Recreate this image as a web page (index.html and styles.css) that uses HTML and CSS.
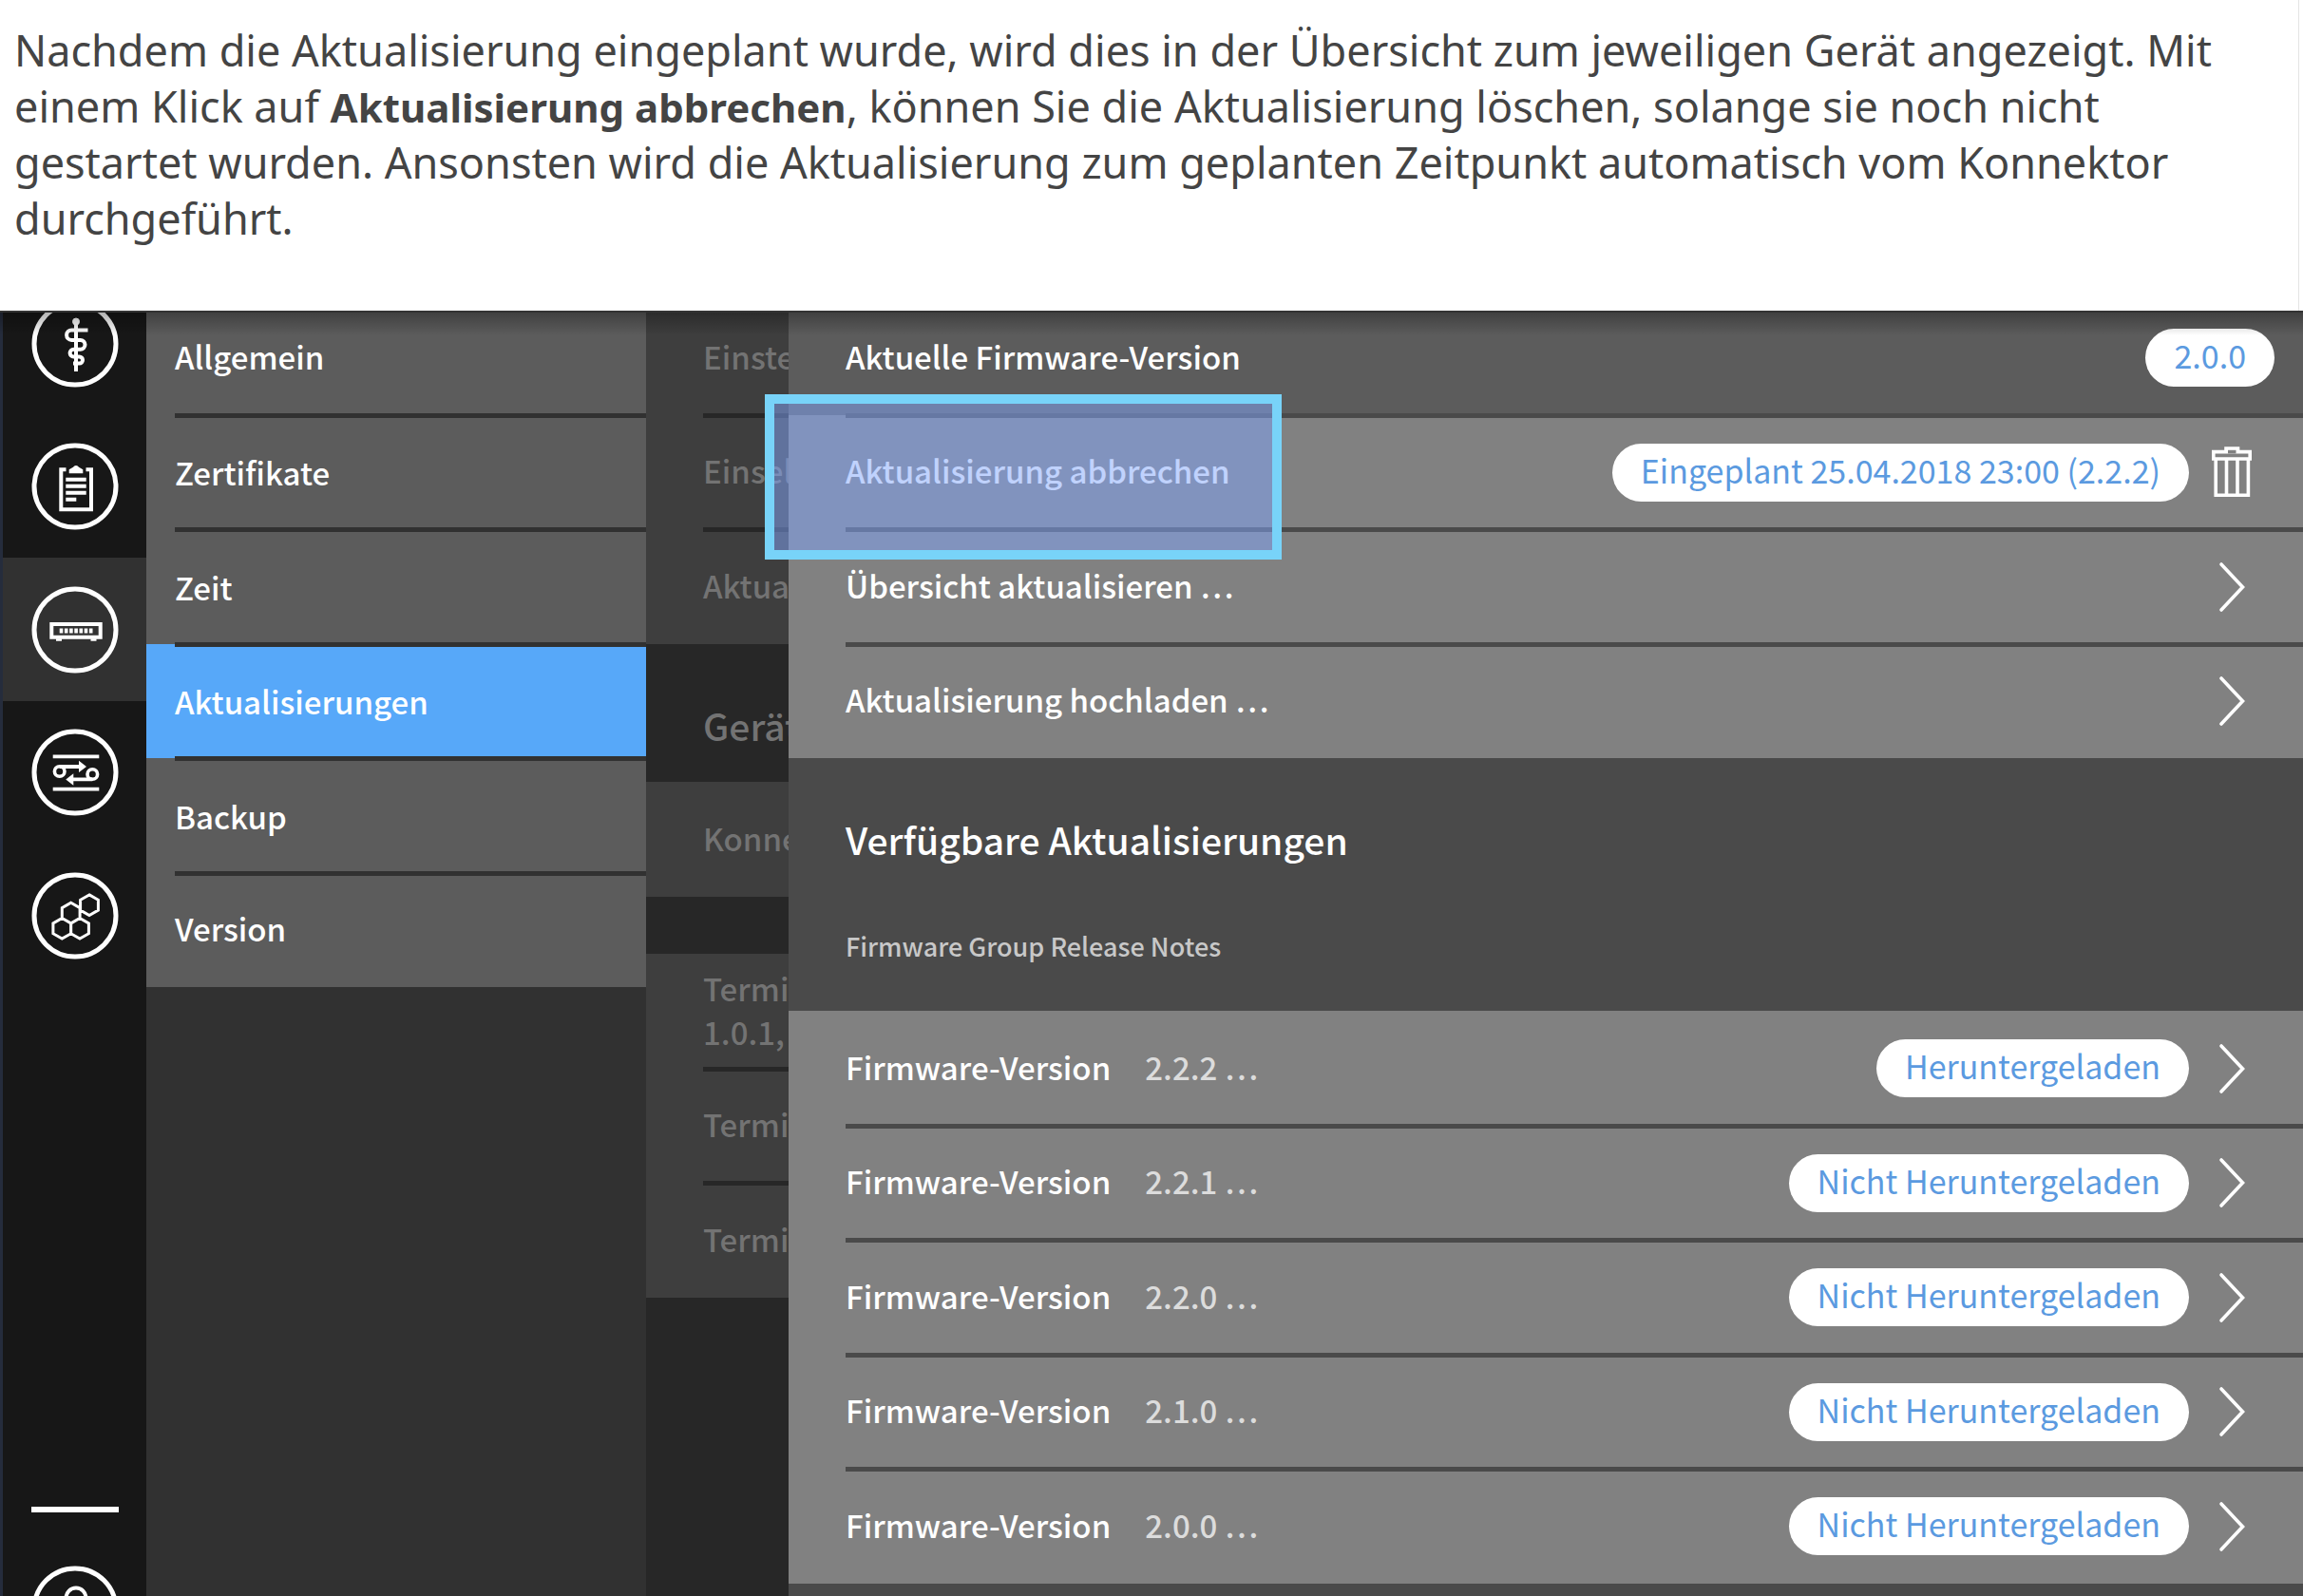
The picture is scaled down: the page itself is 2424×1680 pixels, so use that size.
FILE: index.html
```
<!DOCTYPE html>
<html lang="de">
<head>
<meta charset="utf-8">
<title>Aktualisierungen</title>
<link rel="stylesheet" href="styles.css">
</head>
<body>
<svg class="defs" aria-hidden="true">
  <symbol id="chevron" viewBox="0 0 28 54"><path d="M3 3 25.500 27 3 51" fill="none" stroke="#fff" stroke-width="3.600" stroke-linecap="round"/></symbol>
</svg>

<section class="intro">
  <p>Nachdem die Aktualisierung eingeplant wurde, wird dies in der Übersicht zum jeweiligen Gerät angezeigt. Mit<br>
  einem Klick auf <strong>Aktualisierung abbrechen</strong>, können Sie die Aktualisierung löschen, solange sie noch nicht<br>
  gestartet wurden. Ansonsten wird die Aktualisierung zum geplanten Zeitpunkt automatisch vom Konnektor<br>
  durchgeführt.</p>
</section>

<div class="app">
  <div class="columns">
    <aside class="rail">
      <nav class="rail-nav" aria-label="Bereiche">
        <a class="rail-item" href="#praxis" aria-label="Praxis">
          <svg class="rail-icon" viewBox="0 0 92 92"><circle class="ring" cx="46" cy="46" r="43"/><circle cx="47" cy="22.500" r="3.500" fill="#fff"/><path d="M47 22v53M59.500 31.500H42.300a5.200 5.200 0 0 0 0 10.400H51.600a4.900 4.900 0 0 1 0 9.800H44.500a3.900 3.900 0 0 0 0 7.800H50.500a3.500 3.500 0 0 1 0 7H44" stroke-width="4"/></svg>
        </a>
        <a class="rail-item" href="#protokoll" aria-label="Protokoll">
          <svg class="rail-icon" viewBox="0 0 92 92"><circle class="ring" cx="46" cy="46" r="43"/><path d="M36.500 28.300H31.300V70.300H63V28.300H57.500M36.300 38.700H57.700M36.300 45.700H57.700M36.300 52.700H57.700M36.300 59.700H47.300" stroke-width="4"/><path d="M39.700 32.300v-4l4.300-2.500a3.500 3.500 0 0 1 6 0l4.300 2.500v4z" fill="#fff" stroke="none"/></svg>
        </a>
        <a class="rail-item is-active" href="#konnektor" aria-label="Konnektor" aria-current="page">
          <svg class="rail-icon" viewBox="0 0 92 92"><circle class="ring" cx="46" cy="46" r="43"/><path d="M21.300 40H72.700V53.700H21.300z" stroke-width="4"/><path d="M29.700 47H65" stroke-width="5" stroke-dasharray="3.600 1.600"/><path d="M26 56.500h6M62.500 56.500h6" stroke-width="2.500"/></svg>
        </a>
        <a class="rail-item" href="#verbindungen" aria-label="Verbindungen">
          <svg class="rail-icon" viewBox="0 0 92 92"><circle class="ring" cx="46" cy="46" r="43"/><path d="M22.700 29.300H71.300M22.700 63.700H71.300M29.700 40H51M64.300 53.300H43" stroke-width="3.800"/><circle cx="29.700" cy="45" r="5.300" stroke-width="3.600"/><circle cx="64.300" cy="48" r="5.300" stroke-width="3.600"/><path d="M50 33.700 58 40 50 46zM44.300 47.300 36.300 53.500 44.300 59.700z" fill="#fff" stroke="none"/></svg>
        </a>
        <a class="rail-item" href="#module" aria-label="Module">
          <svg class="rail-icon" viewBox="0 0 92 92"><circle class="ring" cx="46" cy="46" r="43"/><path d="M61 23.900l9.400 5.400v10.800l-9.400 5.400-9.400-5.400v-10.800zM41.700 32.300l9.400 5.400v10.800l-9.400 5.400-9.400-5.400v-10.800zM32.300 48.500l9.400 5.400v10.800l-9.400 5.400-9.400-5.400v-10.800zM51 48.500l9.400 5.400v10.800l-9.400 5.400-9.400-5.400v-10.800z" stroke-width="3"/></svg>
        </a>
      </nav>
      <div class="rail-foot">
        <hr class="rail-line">
        <button class="user" type="button" aria-label="Benutzer">
          <svg class="rail-icon" viewBox="0 0 92 92"><circle class="ring" cx="46" cy="46" r="43"/><circle cx="47" cy="34" r="10.500" stroke-width="4"/><path d="M27 68c0-12 8-18 20-18s20 6 20 18z" stroke-width="4"/></svg>
        </button>
      </div>
    </aside>

    <nav class="menu" aria-label="Konnektor">
      <ul class="list">
        <li class="row"><a class="label" href="#allgemein">Allgemein</a></li>
        <li class="row row-low"><a class="label" href="#zertifikate">Zertifikate</a></li>
        <li class="row row-low"><a class="label" href="#zeit">Zeit</a></li>
        <li class="row row-low is-selected"><a class="label" href="#aktualisierungen" aria-current="page">Aktualisierungen</a></li>
        <li class="row row-low"><a class="label" href="#backup">Backup</a></li>
        <li class="row"><a class="label" href="#version">Version</a></li>
      </ul>
    </nav>

    <section class="under">
      <ul class="list">
        <li class="row"><span class="label">Einste</span></li>
        <li class="row"><span class="label">Einsel</span></li>
        <li class="row"><span class="label">Aktua</span></li>
      </ul>
      <h2 class="title">Gerät</h2>
      <ul class="list">
        <li class="row"><span class="label">Konne</span></li>
      </ul>
      <ul class="list list-gap">
        <li class="row"><span class="label">Termi<br>1.0.1,</span></li>
        <li class="row"><span class="label">Termi</span></li>
        <li class="row"><span class="label">Termi</span></li>
      </ul>
    </section>

    <main class="panel">
      <ul class="list">
        <li class="row row-info"><span class="label">Aktuelle Firmware-Version</span><span class="pill">2.0.0</span></li>
        <li class="row">
          <span class="label">Aktualisierung abbrechen</span><span class="pill">Eingeplant 25.04.2018 23:00 (2.2.2)</span>
          <button class="slot" type="button" aria-label="Aktualisierung abbrechen">
            <svg class="trash" viewBox="0 0 42 54"><path d="M1.800 5.600H40.200V13H1.800zM15 5.600V2H27.500V5.600M4.200 13V51.200H38.400V13M15.500 13V51M27 13V51" fill="none" stroke="#fff" stroke-width="3.600"/><path d="M17 3.800h8.500v3.600H17z" fill="#818181"/></svg>
          </button>
          <div class="highlight"></div>
        </li>
        <li class="row"><a class="link" href="#uebersicht"><span class="label">Übersicht aktualisieren …</span><span class="slot"><svg class="chevron"><use href="#chevron"/></svg></span></a></li>
        <li class="row"><a class="link" href="#hochladen"><span class="label">Aktualisierung hochladen …</span><span class="slot"><svg class="chevron"><use href="#chevron"/></svg></span></a></li>
      </ul>
      <header class="panel-head">
        <h1 class="title">Verfügbare Aktualisierungen</h1>
        <p class="note">Firmware Group Release Notes</p>
      </header>
      <ul class="list">
        <li class="row"><a class="link" href="#v222"><span class="label">Firmware-Version<span class="value">2.2.2 …</span></span><span class="pill">Heruntergeladen</span><span class="slot"><svg class="chevron"><use href="#chevron"/></svg></span></a></li>
        <li class="row"><a class="link" href="#v221"><span class="label">Firmware-Version<span class="value">2.2.1 …</span></span><span class="pill">Nicht Heruntergeladen</span><span class="slot"><svg class="chevron"><use href="#chevron"/></svg></span></a></li>
        <li class="row"><a class="link" href="#v220"><span class="label">Firmware-Version<span class="value">2.2.0 …</span></span><span class="pill">Nicht Heruntergeladen</span><span class="slot"><svg class="chevron"><use href="#chevron"/></svg></span></a></li>
        <li class="row"><a class="link" href="#v210"><span class="label">Firmware-Version<span class="value">2.1.0 …</span></span><span class="pill">Nicht Heruntergeladen</span><span class="slot"><svg class="chevron"><use href="#chevron"/></svg></span></a></li>
        <li class="row"><a class="link" href="#v200"><span class="label">Firmware-Version<span class="value">2.0.0 …</span></span><span class="pill">Nicht Heruntergeladen</span><span class="slot"><svg class="chevron"><use href="#chevron"/></svg></span></a></li>
      </ul>
    </main>
  </div>
</div>
</body>
</html>
```
FILE: styles.css
```
* {
  box-sizing: border-box;
}

body {
  margin: 0;
  height: 100vh;
  display: flex;
  flex-direction: column;
  overflow: hidden;
  background: #fff;
  font-family: "Noto Sans CJK KR", "Noto Sans", sans-serif;
}

ul,
p,
h1,
h2 {
  margin: 0;
  padding: 0;
  list-style: none;
}

a {
  color: inherit;
  text-decoration: none;
}

button {
  padding: 0;
  border: 0;
  background: none;
}

svg {
  display: block;
}

.defs {
  display: none;
}

/* Introduction */

.intro {
  flex: none;
  padding: 23px 0 68px 15px;
  margin-right: 4px;
  border-right: 1px solid #e4e4e4;
  color: #444;
  font: 45px/59px "Noto Sans", sans-serif;
  white-space: nowrap;
}

.intro strong {
  font-size: 42px;
  line-height: 1;
}

/* Application frame, scrolled slightly under its top edge */

.app {
  flex: 1;
  min-height: 0;
  position: relative;
  display: flex;
  overflow: hidden;
}

.app::before {
  content: "";
  position: absolute;
  z-index: 3;
  inset: 0 0 auto;
  height: 24px;
  border-top: 2px solid #333;
  background: linear-gradient(rgba(0, 0, 0, 0.3), rgba(0, 0, 0, 0));
  pointer-events: none;
}

.columns {
  flex: 1;
  min-width: 0;
  display: flex;
  margin-top: -11px;
}

/* Icon rail */

.rail {
  flex: none;
  width: 154px;
  display: flex;
  flex-direction: column;
  justify-content: space-between;
  border-left: 3px solid #252c3c;
  background: #171717;
}

.rail-nav {
  margin-top: -30px;
}

.rail-item {
  display: flex;
  align-items: center;
  height: 150px;
  padding-left: 30px;
}

.rail-item:nth-child(odd) {
  height: 151px;
}

.rail-item.is-active {
  background: #313131;
}

.rail-icon {
  width: 92px;
  height: 92px;
  fill: none;
  stroke: #fff;
}

.ring {
  stroke-width: 5px;
}

.rail-foot {
  display: flex;
  flex-direction: column;
  gap: 56px;
  margin: 0 0 -60px 30px;
}

.rail-line {
  width: 92px;
  height: 6px;
  margin: 0;
  border: 0;
  background: #fff;
}

.user {
  width: 92px;
}

/* Lists */

.row {
  position: relative;
  display: flex;
  align-items: center;
  height: 120px;
  padding: 0 30px;
}

.row:nth-child(odd) {
  height: 121px;
}

.row:not(:last-child)::after {
  content: "";
  position: absolute;
  z-index: 1;
  right: 0;
  bottom: -3px;
  left: 30px;
  height: 5px;
  background: #313131;
}

.label {
  padding-bottom: 4px;
  font-size: 33px;
  font-weight: 500;
  line-height: 46px;
  white-space: nowrap;
}

.title {
  font-size: 39px;
  font-weight: 500;
  line-height: 60px;
  white-space: nowrap;
}

/* Menu column */

.menu {
  flex: none;
  width: 526px;
  background: #313131;
  color: #fff;
}

.menu .row {
  background: #5c5c5c;
}

.menu .row.is-selected {
  background: #57a8f9;
}

.menu .label {
  flex: 1;
}

.row-low .label {
  padding-bottom: 0;
}

/* Column that the open panel covers */

.under {
  flex: none;
  width: 150px;
  overflow: hidden;
  background: #272727;
  color: #737373;
}

.under .row {
  padding: 0 0 0 60px;
  background: #3e3e3e;
}

.under .row::after {
  left: 60px;
  background: #272727;
}

.under .title {
  padding: 55px 0 30px 60px;
}

.list-gap {
  margin-top: 60px;
}

/* Detail panel */

.panel {
  flex: 1;
  min-width: 0;
  background: #4a4a4a;
  color: #fff;
}

.panel .row {
  padding-left: 60px;
  background: #818181;
}

.panel .row::after {
  left: 60px;
  background: #4a4a4a;
}

.panel .row-info {
  background: #5c5c5c;
}

.link {
  flex: 1;
  display: flex;
  align-items: center;
}

.value {
  margin-left: 36px;
  color: #dcdcdc;
}

.pill {
  margin-left: auto;
  padding: 0 30px 5px;
  border-radius: 31px;
  background: #fff;
  color: #5b9ae0;
  font-size: 34px;
  line-height: 56px;
  white-space: nowrap;
}

.slot {
  flex: none;
  width: 90px;
  display: flex;
  justify-content: center;
  margin-left: auto;
}

.pill + .slot {
  margin-left: 0;
}

.trash {
  width: 42px;
  height: 54px;
}

.chevron {
  width: 28px;
  height: 54px;
}

.panel-head {
  padding: 55px 60px 48px;
}

.note {
  margin-top: 63px;
  color: #c8c8c8;
  font-size: 27px;
  font-weight: 500;
  line-height: 40px;
}

/* Marker around the cancel entry */

.highlight {
  position: absolute;
  z-index: 2;
  top: -22px;
  left: -25px;
  width: 544px;
  height: 174px;
  border: 10px solid #78d3f9;
  background: rgba(129, 165, 251, 0.5);
  background-clip: padding-box;
}
```
